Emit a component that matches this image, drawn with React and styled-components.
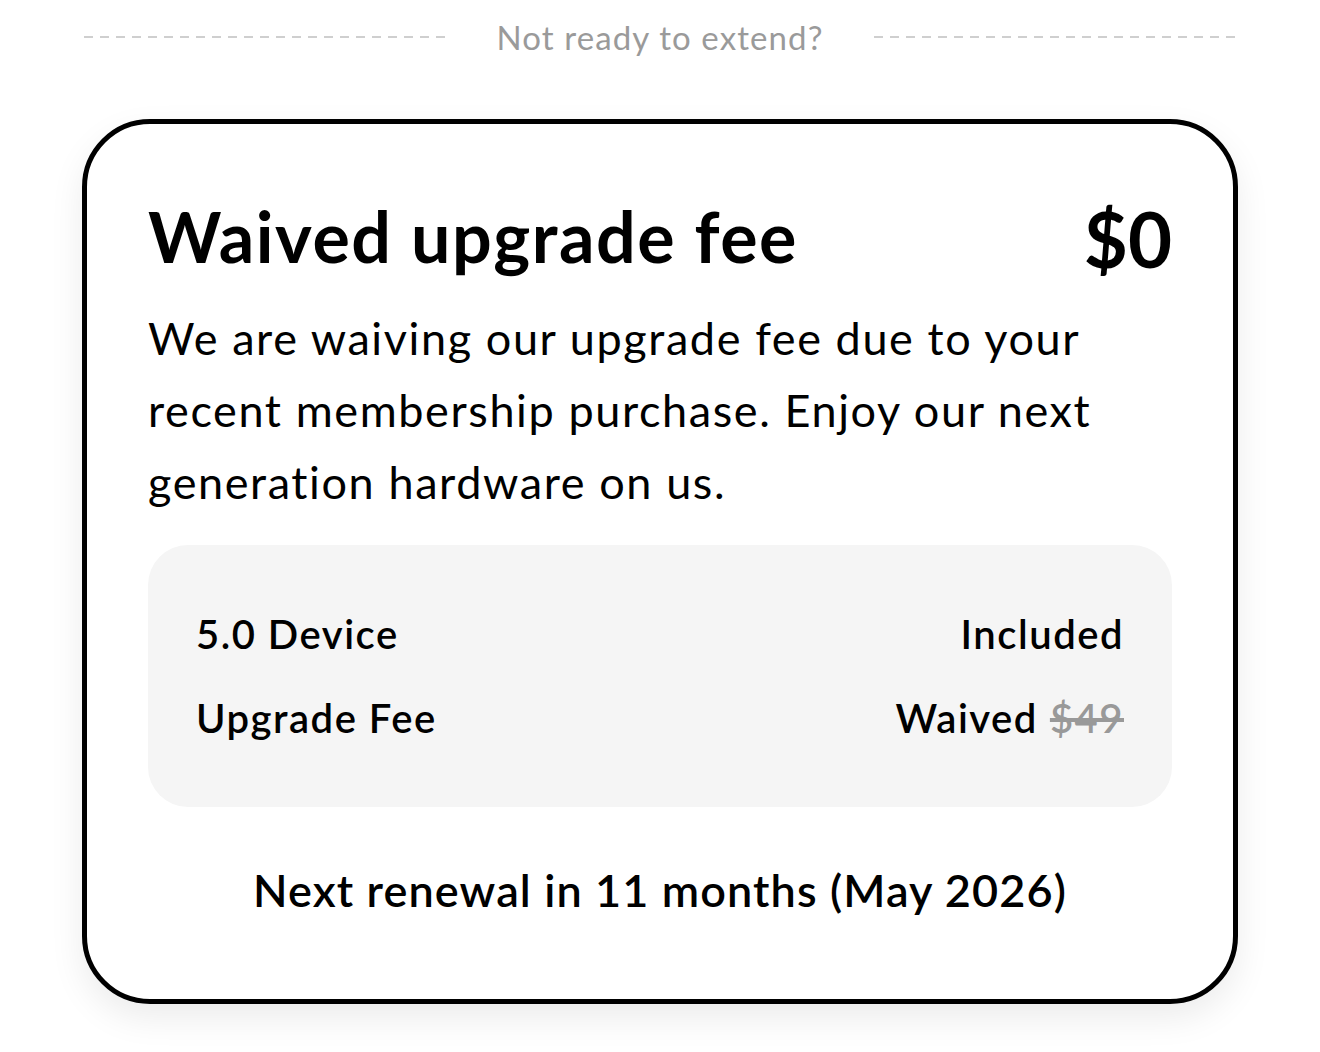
import React from "react";
import styled, { createGlobalStyle } from "styled-components";

const Global = createGlobalStyle`
  html, body { margin: 0; padding: 0; background: #fff; }
  body { font-family: "Lato", "Noto Sans", sans-serif; color: #000; }
  * { box-sizing: border-box; }
`;

const Page = styled.div`
  width: 1320px;
  height: 1052px;
  overflow: hidden;
  background: #fff;
`;

const Divider = styled.div`
  height: 74px;
  display: flex;
  align-items: center;
  gap: 50px;
  padding: 0 84px;
`;

const Dash = styled.div`
  flex: 1;
  height: 2px;
  background-image: linear-gradient(to right, #cfcfcf 0 9px, transparent 9px 16px);
  background-size: 16px 2px;
  background-repeat: repeat-x;
`;

const DividerLabel = styled.span`
  font-size: 33px;
  letter-spacing: 1.1px;
  color: #9a9a9a;
  white-space: nowrap;
`;

const Card = styled.section`
  margin: 45px 82px 0;
  height: 885px;
  border: 5px solid #000;
  border-radius: 68px;
  background: #fff;
  box-shadow: 0 14px 34px rgba(0, 0, 0, 0.08);
  padding: 72px 61px 0;
  display: flex;
  flex-direction: column;
`;

const TitleRow = styled.div`
  display: flex;
  justify-content: space-between;
  align-items: flex-start;
`;

const Title = styled.h2`
  margin: 0;
  font-size: 70px;
  line-height: 80px;
  letter-spacing: 1.5px;
  font-weight: 700;
`;

const Price = styled.span`
  margin-top: 3px;
  font-size: 76px;
  line-height: 80px;
  font-weight: 700;
`;

const Body = styled.p`
  margin: 23px 0 0;
  font-size: 45px;
  line-height: 72px;
  letter-spacing: 1.6px;
  font-weight: 400;
`;

const Summary = styled.div`
  margin-top: 27px;
  background: #f5f5f5;
  border-radius: 40px;
  padding: 65px 48px;
  display: flex;
  flex-direction: column;
  gap: 36px;
`;

const Row = styled.div`
  display: flex;
  justify-content: space-between;
  font-size: 40px;
  line-height: 48px;
  letter-spacing: 1.5px;
  font-weight: 600;
`;

const Old = styled.s`
  color: #999;
  margin-left: 12px;
`;

const Footer = styled.div`
  margin-top: 55px;
  text-align: center;
  font-size: 45px;
  line-height: 56px;
  letter-spacing: 1.1px;
  font-weight: 600;
`;

export default function App() {
  return (
    <Page>
      <Global />
      <Divider>
        <Dash />
        <DividerLabel>Not ready to extend?</DividerLabel>
        <Dash />
      </Divider>
      <Card>
        <TitleRow>
          <Title>Waived upgrade fee</Title>
          <Price>$0</Price>
        </TitleRow>
        <Body>
          We are waiving our upgrade fee due to your recent membership purchase. Enjoy our next generation hardware on us.
        </Body>
        <Summary>
          <Row>
            <span>5.0 Device</span>
            <span>Included</span>
          </Row>
          <Row>
            <span>Upgrade Fee</span>
            <span>
              Waived<Old>$49</Old>
            </span>
          </Row>
        </Summary>
        <Footer>Next renewal in 11 months (May 2026)</Footer>
      </Card>
    </Page>
  );
}
